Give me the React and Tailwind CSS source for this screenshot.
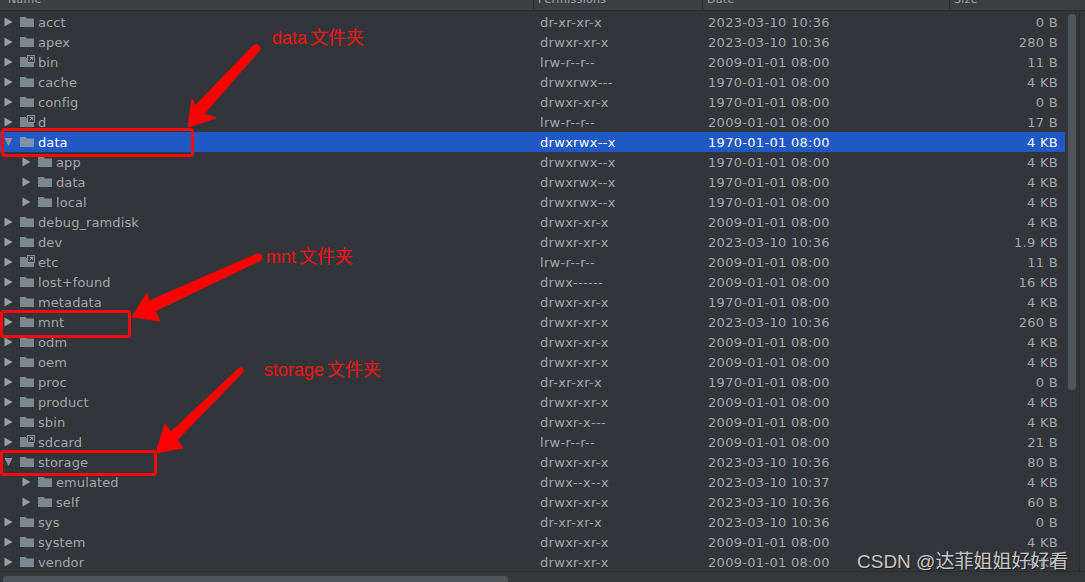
const rows = [
  { n: "acct", p: "dr-xr-xr-x", d: "2023-03-10 10:36", s: "0 B" },
  { n: "apex", p: "drwxr-xr-x", d: "2023-03-10 10:36", s: "280 B" },
  { n: "bin", p: "lrw-r--r--", d: "2009-01-01 08:00", s: "11 B", link: true },
  { n: "cache", p: "drwxrwx---", d: "1970-01-01 08:00", s: "4 KB" },
  { n: "config", p: "drwxr-xr-x", d: "1970-01-01 08:00", s: "0 B" },
  { n: "d", p: "lrw-r--r--", d: "2009-01-01 08:00", s: "17 B", link: true },
  { n: "data", p: "drwxrwx--x", d: "1970-01-01 08:00", s: "4 KB", open: true, sel: true },
  { n: "app", p: "drwxrwx--x", d: "1970-01-01 08:00", s: "4 KB", sub: true },
  { n: "data", p: "drwxrwx--x", d: "1970-01-01 08:00", s: "4 KB", sub: true },
  { n: "local", p: "drwxrwx--x", d: "1970-01-01 08:00", s: "4 KB", sub: true },
  { n: "debug_ramdisk", p: "drwxr-xr-x", d: "2009-01-01 08:00", s: "4 KB" },
  { n: "dev", p: "drwxr-xr-x", d: "2023-03-10 10:36", s: "1.9 KB" },
  { n: "etc", p: "lrw-r--r--", d: "2009-01-01 08:00", s: "11 B", link: true },
  { n: "lost+found", p: "drwx------", d: "2009-01-01 08:00", s: "16 KB" },
  { n: "metadata", p: "drwxr-xr-x", d: "1970-01-01 08:00", s: "4 KB" },
  { n: "mnt", p: "drwxr-xr-x", d: "2023-03-10 10:36", s: "260 B" },
  { n: "odm", p: "drwxr-xr-x", d: "2009-01-01 08:00", s: "4 KB" },
  { n: "oem", p: "drwxr-xr-x", d: "2009-01-01 08:00", s: "4 KB" },
  { n: "proc", p: "dr-xr-xr-x", d: "1970-01-01 08:00", s: "0 B" },
  { n: "product", p: "drwxr-xr-x", d: "2009-01-01 08:00", s: "4 KB" },
  { n: "sbin", p: "drwxr-x---", d: "2009-01-01 08:00", s: "4 KB" },
  { n: "sdcard", p: "lrw-r--r--", d: "2009-01-01 08:00", s: "21 B", link: true },
  { n: "storage", p: "drwxr-xr-x", d: "2023-03-10 10:36", s: "80 B", open: true },
  { n: "emulated", p: "drwx--x--x", d: "2023-03-10 10:37", s: "4 KB", sub: true },
  { n: "self", p: "drwxr-xr-x", d: "2023-03-10 10:36", s: "60 B", sub: true },
  { n: "sys", p: "dr-xr-xr-x", d: "2023-03-10 10:36", s: "0 B" },
  { n: "system", p: "drwxr-xr-x", d: "2009-01-01 08:00", s: "4 KB" },
  { n: "vendor", p: "drwxr-xr-x", d: "2009-01-01 08:00", s: "4 KB" },
];

function Arrow({ open }) {
  return (
    <svg width="12" height="12" viewBox="0 0 12 12" className="shrink-0">
      {open ? <path d="M1.5 2H9.5L5.5 10Z" fill="#8c9097" /> : <path d="M1.5 1.5L9.5 6L1.5 10.5Z" fill="#9a9c9e" />}
    </svg>
  );
}

function Folder({ link, sel }) {
  return (
    <svg width="14" height="12" viewBox="0 0 14 12" className="shrink-0 overflow-visible">
      <path d="M0 1H5.5L7 2.6H14V11H0Z" fill={sel ? "#7f93ae" : "#7c878f"} />
      {link && (
        <g>
          <rect x="7.5" y="-0.5" width="7" height="7" fill="#3a3d3f" stroke="#9ca3a8" strokeWidth="0.8" />
          <path d="M9.5 4.5L12.5 1.5M9.8 1.4H12.6V4.2" fill="none" stroke="#b5babd" strokeWidth="0.8" />
        </g>
      )}
    </svg>
  );
}

function Row({ r }) {
  return (
    <div className={`flex h-5 items-center w-[1065px] shrink-0 ${r.sel ? "bg-[#2058c4] text-white" : "text-[#a4a6a8]"}`}>
      <div className={`flex items-center w-[540px] shrink-0 ${r.sub ? "pl-[21px]" : "pl-[3px]"}`}>
        <Arrow open={r.open} />
        <span className="w-[5px] shrink-0" />
        <Folder link={r.link} sel={r.sel} />
        <span className="ml-1 pt-0.5 tracking-[0.1px]">{r.n}</span>
      </div>
      <div className="w-[168px] shrink-0 pt-0.5">{r.p}</div>
      <div className="w-[200px] shrink-0 pt-0.5">{r.d}</div>
      <div className="flex-1 text-right pr-[7px] pt-0.5">{r.s}</div>
    </div>
  );
}

function Callout({ box, label, labelPos, arrow }) {
  return (
    <>
      <div className={`absolute border-[3px] border-[#f80a0a] rounded-[4px] ${box}`} />
      <div className={`absolute text-[#f31212] text-[18px] leading-5 tracking-normal [word-spacing:-2px] whitespace-nowrap [font-family:'Liberation_Sans','Noto_Sans_CJK_SC',sans-serif] ${labelPos}`}>
        {label}
      </div>
      <svg className="absolute left-0 top-0" width="1085" height="582">
        <path d={arrow} fill="#fb0000" stroke="#fb0000" strokeWidth="1" strokeLinejoin="round" />
      </svg>
    </>
  );
}

export default function App() {
  return (
    <div className="relative w-[1085px] h-[582px] overflow-hidden flex flex-col bg-[#32363a] text-[13px] tracking-[0.3px] [font-family:'DejaVu_Sans',sans-serif]">
      {/* header */}
      <div className="flex h-[11px] shrink-0 overflow-hidden bg-[#3c3f41] border-b border-[#2b2d2f] text-[11px] text-[#a4a6a8] leading-none">
        <div className="w-[533px] pl-2 -mt-[6px]">Name</div>
        <div className="w-[169px] pl-1 border-l border-[#2b2d2f] -mt-[6px]">Permissions</div>
        <div className="w-[247px] pl-1 border-l border-[#2b2d2f] -mt-[6px]">Date</div>
        <div className="flex-1 pl-1 border-l border-[#2b2d2f] -mt-[6px]">Size</div>
      </div>

      {/* table + scrollbar */}
      <div className="flex flex-1 min-h-0">
        <div className="flex flex-col w-[1065px] shrink-0 pt-px overflow-hidden">
          {rows.map((r, i) => (
            <Row key={i} r={r} />
          ))}
        </div>
        <div className="w-[14px] shrink-0 pl-[3px] pt-[3px]">
          <div className="w-[8px] h-[376px] rounded bg-[#50555a]" />
        </div>
        <div className="flex-1 border-l border-[#2b2d2f] bg-[#34383b]" />
      </div>

      {/* bottom bar */}
      <div className="h-[11px] shrink-0 border-t border-[#2b2d2f] bg-[#33373a] pt-[4px] pl-[3px]">
        <div className="w-[505px] h-[8px] rounded-t bg-[#50555a]" />
      </div>

      <Callout
        box="left-[1px] top-[128px] w-[193px] h-[29px]"
        label="data 文件夹"
        labelPos="left-[272px] top-[28px]"
        arrow="M253 46Q258 43 260 47Q261 49 259 51L204 114L216 118L188 127L192 99L195 106Z"
      />
      <Callout
        box="left-0 top-[310px] w-[131px] h-[28px]"
        label="mnt 文件夹"
        labelPos="left-[266px] top-[247px]"
        arrow="M257 254Q261 253 262 257Q262 260 259 261L155 311L160 321L132 317L147 293L149 301Z"
      />
      <Callout
        box="left-0 top-[450px] w-[157px] h-[26px]"
        label="storage 文件夹"
        labelPos="left-[264px] top-[360px]"
        arrow="M238 369Q241 366 243 369Q244 371 242 373L177 440L183 448L156 453L165 424L171 432Z"
      />

      <div className="absolute left-[857px] top-[550px] text-[#c8c8c8] text-[19px] leading-6 tracking-normal whitespace-nowrap [text-shadow:1px_1px_1px_#1c1c1c] [font-family:'Liberation_Sans','Noto_Sans_CJK_SC',sans-serif]">
        CSDN @达菲姐姐好好看
      </div>
    </div>
  );
}
